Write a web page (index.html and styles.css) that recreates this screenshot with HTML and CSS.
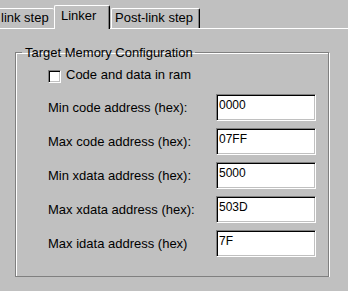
FILE: index.html
```html
<!DOCTYPE html>
<html lang="en">
<head>
    <meta charset="UTF-8">
    <title>Linker</title>
    <link rel="stylesheet" href="styles.css">
</head>
<body>
    <div class="tabs">
        <div class="tab tab-first">link step</div>
        <div class="tab tab-active">Linker</div>
        <div class="tab tab-last">Post-link step</div>
    </div>

    <div class="panel">
        <fieldset class="group">
            <legend>Target Memory Configuration</legend>

            <label class="check-row">
                <input type="checkbox" class="check">
                <span>Code and data in ram</span>
            </label>

            <div class="fields">
                <label for="minCode">Min code address (hex):</label>
                <input type="text" id="minCode" class="edit" value="0000">

                <label for="maxCode">Max code address (hex):</label>
                <input type="text" id="maxCode" class="edit" value="07FF">

                <label for="minXdata">Min xdata address (hex):</label>
                <input type="text" id="minXdata" class="edit" value="5000">

                <label for="maxXdata">Max xdata address (hex):</label>
                <input type="text" id="maxXdata" class="edit" value="503D">

                <label for="maxIdata">Max idata address (hex)</label>
                <input type="text" id="maxIdata" class="edit" value="7F">
            </div>
        </fieldset>
    </div>
</body>
</html>
```

FILE: styles.css
```css
* {
    margin: 0;
    padding: 0;
    box-sizing: border-box;
}

body {
    background: #c0c0c0;
    color: #000;
    font-family: 'Liberation Sans', Arial, sans-serif;
    font-size: 13px;
    line-height: 15px;
    overflow: hidden;
}

/* tab strip */
.tabs {
    display: flex;
    align-items: flex-end;
    height: 29px;
    border-bottom: 1px solid #fff;
}

.tab {
    height: 20px;
    padding-top: 1px;
    background: #c0c0c0;
    border-top: 1px solid #fff;
    border-left: 1px solid #fff;
    border-radius: 2px 2px 0 0;
    white-space: nowrap;
}

.tab-first {
    width: 60px;
    margin-left: -6px;
    padding-left: 6px;
}

.tab-active {
    width: 56px;
    height: 24px;
    margin-bottom: -1px;
    padding-top: 2px;
    padding-left: 6px;
    border-right: 1px solid #000;
    box-shadow: inset -1px 0 0 #808080;
}

.tab-last {
    width: 89px;
    margin-left: 1px;
    padding-left: 3px;
    border-right: 1px solid #000;
    box-shadow: inset -1px 0 0 #808080;
}

/* group box */
.panel {
    padding: 16px 19px 0 15px;
}

.group {
    width: 314px;
    padding: 0 12px 19px 32px;
    border: 1px solid #808080;
    box-shadow: inset 1px 1px 0 #fff, 1px 1px 0 #fff;
}

.group legend {
    margin-left: -26px;
    padding: 0 2px 0 3px;
    line-height: 15px;
}

.check-row {
    display: flex;
    align-items: flex-start;
    margin-top: 7px;
    margin-bottom: 11px;
}

.check,
.edit {
    appearance: none;
    background: #fff;
    border: 1px solid;
    border-color: #808080 #fff #fff #808080;
    box-shadow: inset 1px 1px 0 #000, inset -1px -1px 0 #c0c0c0;
    outline: none;
}

.check {
    width: 13px;
    height: 13px;
    margin-top: 3px;
    margin-right: 5px;
}

.fields {
    display: grid;
    grid-template-columns: 168px 100px;
    grid-auto-rows: 27px;
    row-gap: 7px;
    align-items: center;
}

.edit {
    width: 100px;
    height: 27px;
    padding: 2px 2px 8px;
    font-family: 'Liberation Sans', Arial, sans-serif;
    font-size: 12px;
    line-height: 15px;
    color: #000;
}
```
